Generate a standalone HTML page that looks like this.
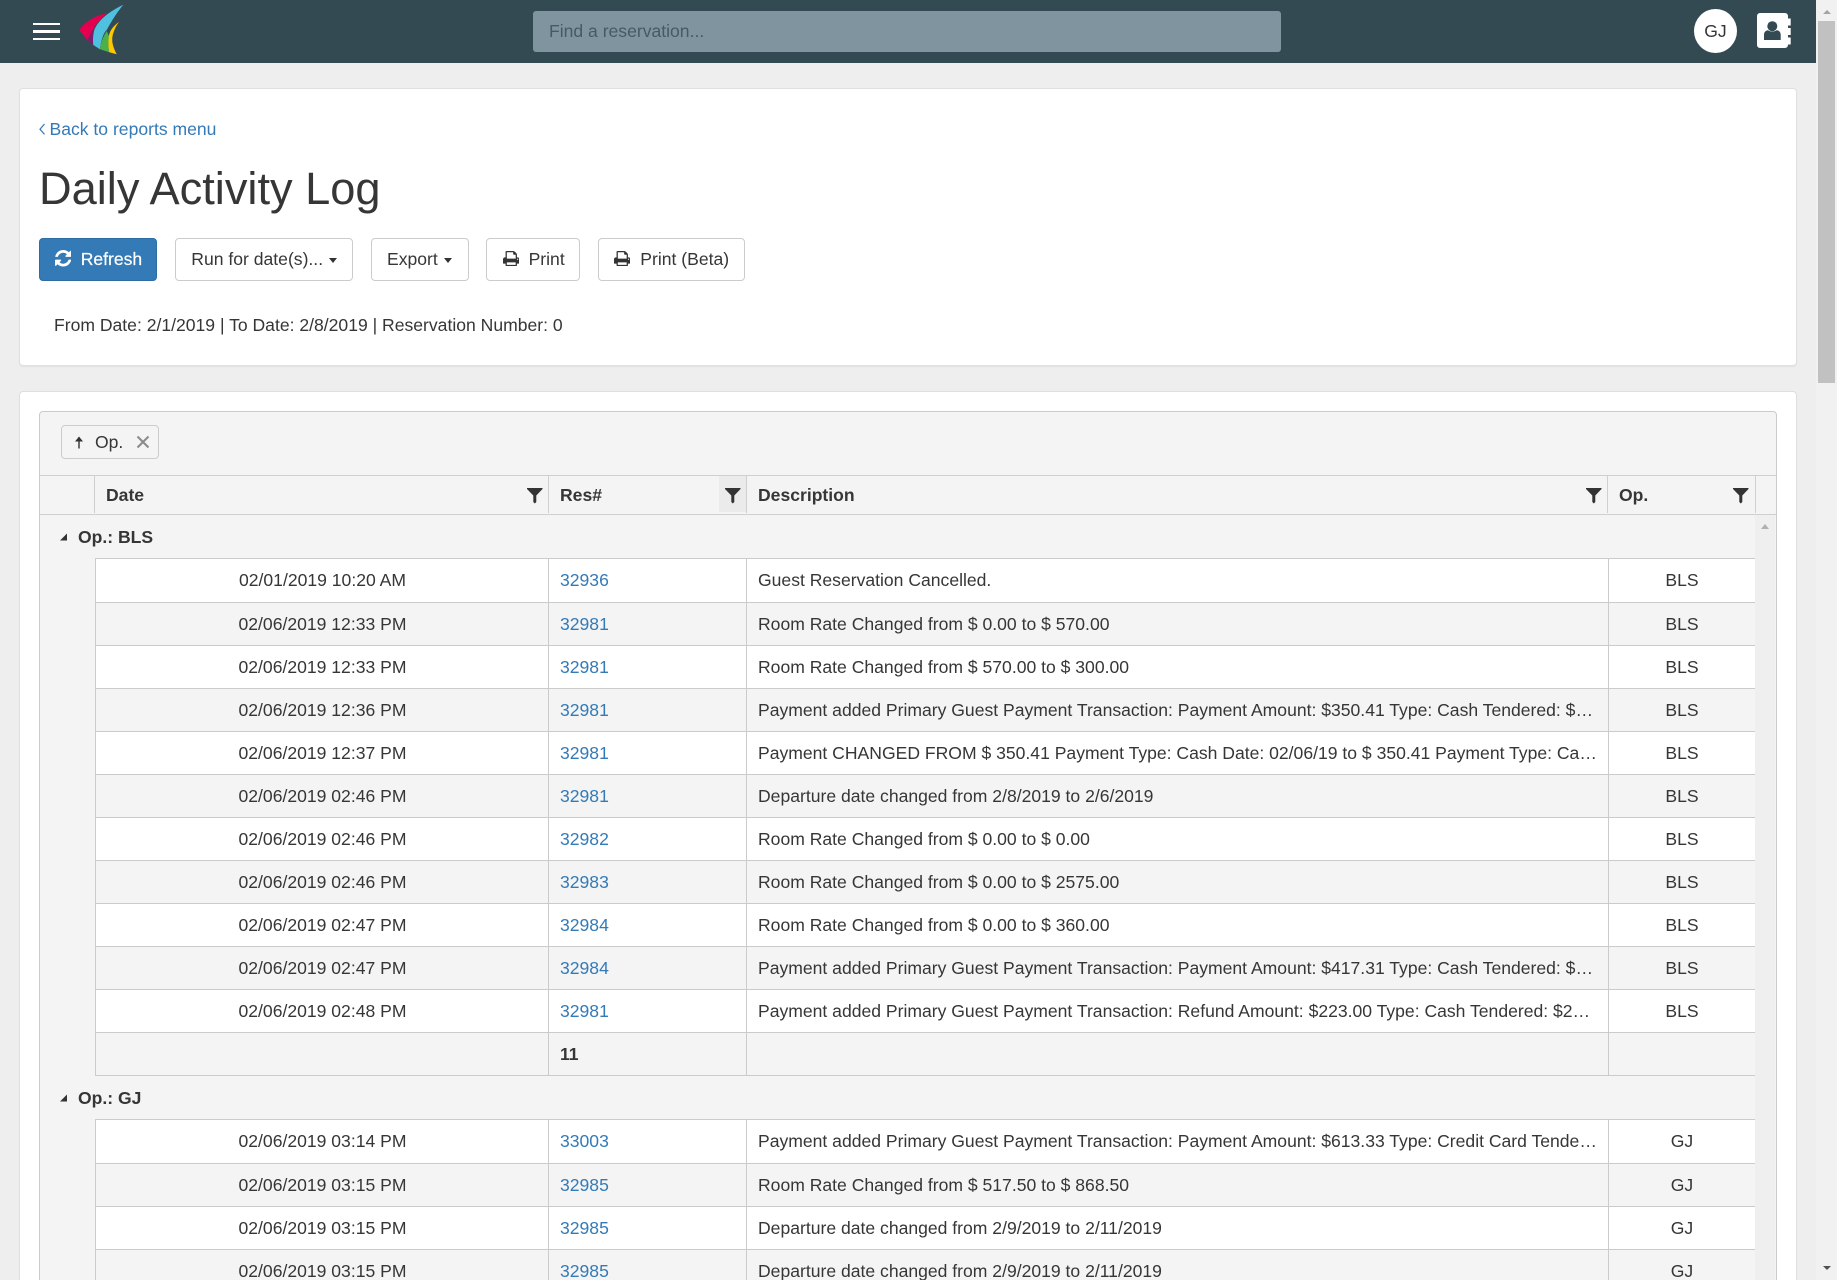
<!DOCTYPE html>
<html>
<head>
<meta charset="utf-8">
<title>Daily Activity Log</title>
<style>
html,body{margin:0;padding:0;width:1837px;height:1280px;overflow:hidden;background:#eee;}
body{font-family:"Liberation Sans",sans-serif;font-size:17.57px;color:#363636;position:relative;}
a{color:#337ab7;text-decoration:none;}
.abs{position:absolute;white-space:nowrap;}
#hdr{position:absolute;left:0;top:0;width:1816px;height:63px;background:#344a53;}
.bar{position:absolute;left:33px;width:27px;height:2.4px;background:#fff;}
#search{position:absolute;left:533px;top:11px;width:748px;height:41px;background:#7f949e;border-radius:3px;color:#455a64;line-height:40px;text-indent:16px;}
#gj{position:absolute;left:1694px;top:9px;width:43px;height:44px;border-radius:50%;background:#fff;text-align:center;line-height:44px;}
.card{position:absolute;left:19px;width:1776px;background:#fff;border:1px solid #dfdfdf;border-radius:4px;box-shadow:0 1px 1px rgba(0,0,0,.05);box-sizing:content-box;}
.btn{position:absolute;top:238px;height:43px;box-sizing:border-box;border:1px solid #ccc;border-radius:4px;background:#fff;line-height:41px;white-space:nowrap;}
.caret{display:inline-block;width:0;height:0;border-left:4.5px solid transparent;border-right:4.5px solid transparent;border-top:5px solid #333;vertical-align:middle;margin-left:1px;}
#grid{position:absolute;left:39px;top:411px;width:1736px;height:900px;background:#f4f4f4;border:1px solid #cbcbcb;border-radius:4px;box-sizing:content-box;}
.hline{position:absolute;left:40px;width:1736px;height:1px;background:#cfcfcf;}
.vline{position:absolute;width:1px;background:#cfcfcf;}
.th{position:absolute;top:476px;height:38px;line-height:38px;font-weight:bold;}
.filter{position:absolute;top:488px;width:16px;height:16px;}
.grp{position:absolute;left:78px;font-weight:bold;height:20px;line-height:20px;}
.r{position:absolute;left:95px;width:1660px;display:flex;box-sizing:border-box;border-top:1px solid #cbcbcb;border-left:1px solid #cbcbcb;background:#fff;}
.r.e{background:#f4f4f4;}
.r>div{box-sizing:border-box;white-space:nowrap;overflow:hidden;text-overflow:ellipsis;line-height:42px;height:42px;}
.c1{width:452px;text-align:center;padding-left:1px;}
.c2{width:198px;border-left:1px solid #cbcbcb;padding-left:11px;}
.c3{width:862px;border-left:1px solid #cbcbcb;padding:0 9px 0 11px;}
.c4{width:147px;border-left:1px solid #cbcbcb;text-align:center;}
</style>
</head>
<body>
<div id="hdr"></div>
<div class="bar" style="top:23px"></div>
<div class="bar" style="top:30.4px"></div>
<div class="bar" style="top:38px"></div>
<svg class="abs" style="left:0;top:0" width="140" height="63" viewBox="0 0 140 63">
<path d="M79.3 30C85 22 95 15.500 106.700 13.300L98 22 94.300 27 87.300 40Z" fill="#e5004f"/>
<path d="M87.300 40L94.300 27 93.300 45Z" fill="#7a1f6e"/>
<path d="M123.300 4.700C110 11 98 20 94.300 30 92.800 36 92.800 41 93.300 45L100 49.300C101 40 104 32 106.700 30 112 20 118 11 123.300 4.700Z" fill="#4fc0e0"/>
<path d="M100 49.300L109.300 52.300C108 46 108 41 109.300 36.700L106.700 31C103 37 100.500 43 100 49.300Z" fill="#4caf4a"/>
<path d="M119 22C112 27 109 32 108.700 38 108 44 108.500 48 109.300 52.300L116.700 54.300C113 47 111 41 113 34 114.500 29 116.500 25 119 22Z" fill="#fdc800"/>
</svg>
<div id="search">Find a reservation...</div>
<div id="gj">GJ</div>
<svg class="abs" style="left:1755px;top:11px" width="38" height="40" viewBox="0 0 38 40">
<path d="M5 2h25a3 3 0 0 1 3 3v2.500h2.700v7H33v2.500h2.700v7H33v2.500h2.700v7H33V34a3 3 0 0 1-3 3H5a3 3 0 0 1-3-3V5a3 3 0 0 1 3-3z" fill="#fff"/>
<circle cx="17.300" cy="15.200" r="5" fill="#344a53"/>
<path d="M9 29v-5.500c0-2.500 2-4.300 4-4.300 1 .7 2.500 1.300 4.300 1.300s3.300-.6 4.300-1.300c2 0 4.100 1.800 4.100 4.300V29z" fill="#344a53"/>
</svg>

<div style="position:absolute;left:1816px;top:0;width:21px;height:1280px;background:#f1f1f1"></div>
<div style="position:absolute;left:1818px;top:21px;width:17px;height:362px;background:#c1c1c1"></div>
<div class="abs" style="left:1823px;top:10px;width:0;height:0;border-left:4px solid transparent;border-right:4px solid transparent;border-bottom:4px solid #a3a3a3"></div>
<div class="abs" style="left:1823px;top:1266px;width:0;height:0;border-left:4px solid transparent;border-right:4px solid transparent;border-top:4px solid #505050"></div>

<div class="card" style="top:88px;height:276px"></div>
<svg class="abs" style="left:38px;top:121px" width="9" height="16" viewBox="0 0 9 16"><path d="M6.500 3L2 8.200 6.500 13.400" fill="none" stroke="#337ab7" stroke-width="1.200"/></svg>
<a class="abs" style="left:49.500px;top:119px;line-height:20px">Back to reports menu</a>
<div class="abs" style="left:39px;top:162px;font-size:45.200px;line-height:54px">Daily Activity Log</div>

<div class="btn" style="left:39px;width:118px;background:#337ab7;border-color:#2e6da4;color:#fff;-webkit-text-stroke:.2px #fff">
<svg class="abs" style="left:14.500px;top:11px" width="16.500" height="16.500" viewBox="128 128 1536 1536"><path fill="#fff" d="M1639 1056q0 5-1 7-64 268-268 434.500t-478 166.500q-146 0-282.500-55t-243.500-157l-129 129q-19 19-45 19t-45-19-19-45v-448q0-26 19-45t45-19h448q26 0 45 19t19 45-19 45l-137 137q71 66 161 102t187 36q134 0 250-65t186-179q11-17 53-117 8-23 30-23h192q13 0 22.500 9.500t9.500 22.500zm25-800v448q0 26-19 45t-45 19h-448q-26 0-45-19t-19-45 19-45l138-138q-148-137-349-137-134 0-250 65t-186 179q-11 17-53 117-8 23-30 23h-199q-13 0-22.500-9.500t-9.500-22.500v-7q65-268 270-434.500t480-166.500q146 0 284 55.500t245 156.500l130-129q19-19 45-19t45 19 19 45z"/></svg>
<span class="abs" style="left:40.700px;top:0">Refresh</span></div>
<div class="btn" style="left:175px;width:178px"><span class="abs" style="left:15.300px;top:0">Run for date(s)... <i class="caret"></i></span></div>
<div class="btn" style="left:371px;width:98px"><span class="abs" style="left:15px;top:0">Export <i class="caret"></i></span></div>
<div class="btn" style="left:486px;width:94px">
<svg class="abs" style="left:15.500px;top:12px" width="16.500" height="15.200" viewBox="64 128 1664 1536"><path fill="#333" d="M448 1536h896v-256h-896v256zm0-640h896v-384h-160q-40 0-68-28t-28-68v-160h-640v640zm1152 64q0-26-19-45t-45-19-45 19-19 45 19 45 45 19 45-19 19-45zm128 0v416q0 13-9.500 22.500t-22.500 9.500h-224v160q0 40-28 68t-68 28h-960q-40 0-68-28t-28-68v-160h-224q-13 0-22.500-9.500t-9.500-22.500v-416q0-79 56.500-135.500t135.500-56.500h64v-544q0-40 28-68t68-28h672q40 0 88 20t76 48l152 152q28 28 48 76t20 88v256h64q79 0 135.500 56.500t56.500 135.500z"/></svg>
<span class="abs" style="left:41.600px;top:0">Print</span></div>
<div class="btn" style="left:598px;width:147px">
<svg class="abs" style="left:14.800px;top:12px" width="16.500" height="15.200" viewBox="64 128 1664 1536"><path fill="#333" d="M448 1536h896v-256h-896v256zm0-640h896v-384h-160q-40 0-68-28t-28-68v-160h-640v640zm1152 64q0-26-19-45t-45-19-45 19-19 45 19 45 45 19 45-19 19-45zm128 0v416q0 13-9.500 22.500t-22.500 9.500h-224v160q0 40-28 68t-68 28h-960q-40 0-68-28t-28-68v-160h-224q-13 0-22.500-9.500t-9.500-22.500v-416q0-79 56.500-135.500t135.500-56.500h64v-544q0-40 28-68t68-28h672q40 0 88 20t76 48l152 152q28 28 48 76t20 88v256h64q79 0 135.500 56.500t56.500 135.500z"/></svg>
<span class="abs" style="left:41.300px;top:0">Print (Beta)</span></div>
<div class="abs" style="left:54px;top:315px;line-height:20px">From Date: 2/1/2019 | To Date: 2/8/2019 | Reservation Number: 0</div>

<div class="card" style="top:391px;height:950px"></div>
<div id="grid"></div>
<div style="position:absolute;left:1755px;top:515px;width:20px;height:765px;background:#efefef"></div>
<div class="abs" style="left:1761px;top:524px;width:0;height:0;border-left:4.500px solid transparent;border-right:4.500px solid transparent;border-bottom:5px solid #b0b0b0"></div>

<div class="abs" style="left:61px;top:425px;width:98px;height:34px;box-sizing:border-box;border:1px solid #ccc;border-radius:4px;background:#f4f4f4"></div>
<svg class="abs" style="left:74px;top:436px" width="10" height="13" viewBox="0 0 10 13"><path d="M5 .5L1 5.500H4.300V12.500H5.700V5.500H9Z" fill="#333"/></svg>
<div class="abs" style="left:95px;top:432px;line-height:20px">Op.</div>
<svg class="abs" style="left:136px;top:435px" width="14" height="14" viewBox="0 0 14 14"><path d="M1.500 1.500L12.500 12.500M12.500 1.500L1.500 12.500" stroke="#8a8a8a" stroke-width="2"/></svg>

<div class="hline" style="top:475px"></div>
<div class="hline" style="top:514px"></div>
<div class="vline" style="left:94px;top:476px;height:37px"></div>
<div class="vline" style="left:548px;top:476px;height:37px"></div>
<div class="vline" style="left:746px;top:476px;height:37px"></div>
<div class="vline" style="left:1607px;top:476px;height:37px"></div>
<div class="vline" style="left:1755px;top:476px;height:37px"></div>
<div style="position:absolute;left:719px;top:476px;width:27px;height:36px;background:#ebebeb"></div>

<div class="th" style="left:106px">Date</div>
<div class="th" style="left:560px">Res#</div>
<div class="th" style="left:758px">Description</div>
<div class="th" style="left:1619px">Op.</div>
<svg class="filter" style="left:527px" viewBox="0 0 16 16"><path d="M0 0H15.500V1L9.300 7.500V14L7.800 15.500 6.300 14V7.500L0 1Z" fill="#333"/></svg>
<svg class="filter" style="left:725px" viewBox="0 0 16 16"><path d="M0 0H15.500V1L9.300 7.500V14L7.800 15.500 6.300 14V7.500L0 1Z" fill="#333"/></svg>
<svg class="filter" style="left:1586px" viewBox="0 0 16 16"><path d="M0 0H15.500V1L9.300 7.500V14L7.800 15.500 6.300 14V7.500L0 1Z" fill="#333"/></svg>
<svg class="filter" style="left:1733px" viewBox="0 0 16 16"><path d="M0 0H15.500V1L9.300 7.500V14L7.800 15.500 6.300 14V7.500L0 1Z" fill="#333"/></svg>

<svg class="abs" style="left:59px;top:532px" width="10" height="10" viewBox="0 0 10 10"><path d="M8 1.500V8.500H1Z" fill="#333"/></svg>
<div class="grp" style="top:527px">Op.: BLS</div>

<div class="r" style="top:558px;height:44px"><div class="c1" style="height:43px;line-height:43px">02/01/2019 10:20 AM</div><div class="c2" style="height:43px;line-height:43px"><a>32936</a></div><div class="c3" style="height:43px;line-height:43px">Guest Reservation Cancelled.</div><div class="c4" style="height:43px;line-height:43px">BLS</div></div>
<div class="r e" style="top:602px;height:43px"><div class="c1">02/06/2019 12:33 PM</div><div class="c2"><a>32981</a></div><div class="c3">Room Rate Changed from $ 0.00 to $ 570.00</div><div class="c4">BLS</div></div>
<div class="r" style="top:645px;height:43px"><div class="c1">02/06/2019 12:33 PM</div><div class="c2"><a>32981</a></div><div class="c3">Room Rate Changed from $ 570.00 to $ 300.00</div><div class="c4">BLS</div></div>
<div class="r e" style="top:688px;height:43px"><div class="c1">02/06/2019 12:36 PM</div><div class="c2"><a>32981</a></div><div class="c3">Payment added Primary Guest Payment Transaction: Payment Amount: $350.41 Type: Cash Tendered: $350.41</div><div class="c4">BLS</div></div>
<div class="r" style="top:731px;height:43px"><div class="c1">02/06/2019 12:37 PM</div><div class="c2"><a>32981</a></div><div class="c3">Payment CHANGED FROM $ 350.41 Payment Type: Cash Date: 02/06/19 to $ 350.41 Payment Type: Cash Date: 02/06/19</div><div class="c4">BLS</div></div>
<div class="r e" style="top:774px;height:43px"><div class="c1">02/06/2019 02:46 PM</div><div class="c2"><a>32981</a></div><div class="c3">Departure date changed from 2/8/2019 to 2/6/2019</div><div class="c4">BLS</div></div>
<div class="r" style="top:817px;height:43px"><div class="c1">02/06/2019 02:46 PM</div><div class="c2"><a>32982</a></div><div class="c3">Room Rate Changed from $ 0.00 to $ 0.00</div><div class="c4">BLS</div></div>
<div class="r e" style="top:860px;height:43px"><div class="c1">02/06/2019 02:46 PM</div><div class="c2"><a>32983</a></div><div class="c3">Room Rate Changed from $ 0.00 to $ 2575.00</div><div class="c4">BLS</div></div>
<div class="r" style="top:903px;height:43px"><div class="c1">02/06/2019 02:47 PM</div><div class="c2"><a>32984</a></div><div class="c3">Room Rate Changed from $ 0.00 to $ 360.00</div><div class="c4">BLS</div></div>
<div class="r e" style="top:946px;height:43px"><div class="c1">02/06/2019 02:47 PM</div><div class="c2"><a>32984</a></div><div class="c3">Payment added Primary Guest Payment Transaction: Payment Amount: $417.31 Type: Cash Tendered: $417.31</div><div class="c4">BLS</div></div>
<div class="r" style="top:989px;height:43px"><div class="c1">02/06/2019 02:48 PM</div><div class="c2"><a>32981</a></div><div class="c3">Payment added Primary Guest Payment Transaction: Refund Amount: $223.00 Type: Cash Tendered: $223.00</div><div class="c4">BLS</div></div>
<div class="r e" style="top:1032px;height:44px;border-bottom:1px solid #cbcbcb"><div class="c1"></div><div class="c2"><b>11</b></div><div class="c3"></div><div class="c4"></div></div>

<svg class="abs" style="left:59px;top:1093px" width="10" height="10" viewBox="0 0 10 10"><path d="M8 1.500V8.500H1Z" fill="#333"/></svg>
<div class="grp" style="top:1088px">Op.: GJ</div>

<div class="r" style="top:1119px;height:44px"><div class="c1" style="height:43px;line-height:43px">02/06/2019 03:14 PM</div><div class="c2" style="height:43px;line-height:43px"><a>33003</a></div><div class="c3" style="height:43px;line-height:43px">Payment added Primary Guest Payment Transaction: Payment Amount: $613.33 Type: Credit Card Tendered: $613.33</div><div class="c4" style="height:43px;line-height:43px">GJ</div></div>
<div class="r e" style="top:1163px;height:43px"><div class="c1">02/06/2019 03:15 PM</div><div class="c2"><a>32985</a></div><div class="c3">Room Rate Changed from $ 517.50 to $ 868.50</div><div class="c4">GJ</div></div>
<div class="r" style="top:1206px;height:43px"><div class="c1">02/06/2019 03:15 PM</div><div class="c2"><a>32985</a></div><div class="c3">Departure date changed from 2/9/2019 to 2/11/2019</div><div class="c4">GJ</div></div>
<div class="r e" style="top:1249px;height:43px"><div class="c1">02/06/2019 03:15 PM</div><div class="c2"><a>32985</a></div><div class="c3">Departure date changed from 2/9/2019 to 2/11/2019</div><div class="c4">GJ</div></div>
</body>
</html>
